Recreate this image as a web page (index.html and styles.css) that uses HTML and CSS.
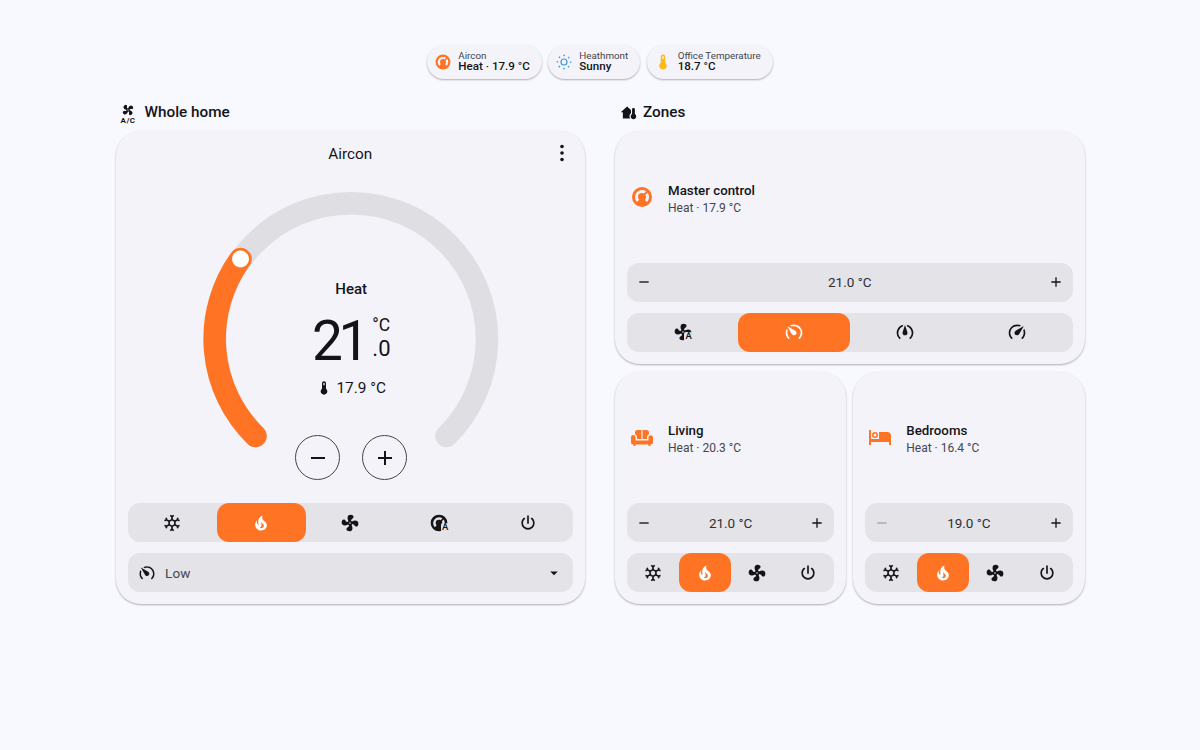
FILE: index.html
```html
<!DOCTYPE html>
<html lang="en">
<head>
    <meta charset="UTF-8">
    <meta name="viewport" content="width=device-width, initial-scale=1.0">
    <title>Climate</title>
    <link rel="stylesheet" href="styles.css">
</head>
<body>
    <svg class="icon-defs" aria-hidden="true">
        <symbol id="i-fan" viewBox="0 0 24 24"><path d="M12,11A1,1 0 0,0 11,12A1,1 0 0,0 12,13A1,1 0 0,0 13,12A1,1 0 0,0 12,11M12.5,2C17,2 17.11,5.57 14.75,6.75C13.76,7.24 13.32,8.29 13.13,9.22C13.61,9.42 14.03,9.73 14.35,10.13C18.05,8.13 22.03,8.92 22.03,12.5C22.03,17 18.46,17.1 17.28,14.73C16.78,13.74 15.72,13.3 14.79,13.11C14.59,13.59 14.28,14 13.88,14.34C15.87,18.03 15.08,22 11.5,22C7,22 6.91,18.42 9.27,17.24C10.25,16.75 10.69,15.71 10.89,14.79C10.4,14.59 9.97,14.27 9.65,13.87C5.96,15.85 2,15.07 2,11.5C2,7 5.56,6.89 6.74,9.26C7.24,10.25 8.29,10.68 9.22,10.87C9.41,10.39 9.73,9.97 10.14,9.65C8.15,5.96 8.94,2 12.5,2Z"/></symbol>
        <symbol id="i-fire" viewBox="0 0 24 24"><path d="M17.66 11.2C17.43 10.9 17.15 10.64 16.89 10.38C16.22 9.78 15.46 9.35 14.82 8.72C13.33 7.26 13 4.85 13.95 3C13 3.23 12.17 3.75 11.46 4.32C8.87 6.4 7.85 10.07 9.07 13.22C9.11 13.32 9.15 13.42 9.15 13.55C9.15 13.77 9 13.97 8.8 14.05C8.57 14.15 8.33 14.09 8.14 13.93C8.08 13.88 8.04 13.83 8 13.76C6.87 12.33 6.69 10.28 7.45 8.64C5.78 10 4.87 12.3 5 14.47C5.06 14.97 5.12 15.47 5.29 15.97C5.43 16.57 5.7 17.17 6 17.7C7.08 19.43 8.95 20.67 10.96 20.92C13.1 21.19 15.39 20.8 17.03 19.32C18.86 17.66 19.5 15 18.56 12.72L18.43 12.46C18.22 12 17.66 11.2 17.66 11.2M14.5 17.5C14.22 17.74 13.76 18 13.4 18.1C12.28 18.5 11.16 17.94 10.5 17.28C11.69 17 12.4 16.12 12.61 15.23C12.78 14.43 12.46 13.77 12.33 13C12.21 12.26 12.23 11.63 12.5 10.94C12.69 11.32 12.89 11.7 13.13 12C13.9 13 15.11 13.44 15.37 14.8C15.41 14.94 15.43 15.08 15.43 15.23C15.46 16.05 15.1 16.95 14.5 17.5H14.5Z"/></symbol>
        <symbol id="i-snow" viewBox="0 0 24 24"><path d="M20.79,13.95L18.46,14.57L16.46,13.44V10.56L18.46,9.43L20.79,10.05L21.31,8.12L19.54,7.65L20,5.88L18.07,5.36L17.45,7.69L15.45,8.82L13,7.38V5.12L14.71,3.41L13.29,2L12,3.29L10.71,2L9.29,3.41L11,5.12V7.38L8.5,8.82L6.5,7.69L5.92,5.36L4,5.88L4.47,7.65L2.7,8.12L3.22,10.05L5.55,9.43L7.55,10.56V13.45L5.55,14.58L3.22,13.96L2.7,15.89L4.47,16.36L4,18.12L5.93,18.64L6.55,16.31L8.55,15.18L11,16.62V18.88L9.29,20.59L10.71,22L12,20.71L13.29,22L14.7,20.59L13,18.88V16.62L15.5,15.17L17.5,16.3L18.12,18.63L20,18.12L19.53,16.35L21.3,15.88L20.79,13.95M9.5,10.56L12,9.11L14.5,10.56V13.44L12,14.89L9.5,13.44V10.56Z"/></symbol>
        <symbol id="i-power" viewBox="0 0 24 24"><path d="M16.56,5.44L15.11,6.89C16.84,7.94 18,9.83 18,12A6,6 0 0,1 12,18A6,6 0 0,1 6,12C6,9.83 7.16,7.94 8.88,6.88L7.44,5.44C5.36,6.88 4,9.28 4,12A8,8 0 0,0 12,20A8,8 0 0,0 20,12C20,9.28 18.64,6.88 16.56,5.44M13,3H11V13H13"/></symbol>
        <symbol id="i-thermostat" viewBox="0 0 24 24"><path fill-rule="evenodd" d="M16.95,16.95L14.83,14.83C15.55,14.1 16,13.1 16,12C16,11.26 15.79,10.57 15.43,10L17.6,7.81C18.5,9.05 19,10.5 19,12C19,13.93 18.22,15.68 16.95,16.95M12,5C13.5,5 14.95,5.5 16.19,6.4L14,8.56C13.43,8.21 12.74,8 12,8A4,4 0 0,0 8,12C8,13.1 8.45,14.1 9.17,14.83L7.05,16.95C5.78,15.68 5,13.93 5,12A7,7 0 0,1 12,5M12,2A10,10 0 0,0 2,12A10,10 0 0,0 12,22A10,10 0 0,0 22,12A10,10 0 0,0 12,2Z"/></symbol>
        <symbol id="i-thermometer" viewBox="0 0 24 24"><path d="M15 13V5A3 3 0 0 0 9 5V13A5 5 0 1 0 15 13M12 4A1 1 0 0 1 13 5V8H11V5A1 1 0 0 1 12 4Z"/></symbol>
        <symbol id="i-slow" viewBox="0 0 24 24"><path d="M12 16C13.66 16 15 14.66 15 13C15 11.88 14.39 10.9 13.5 10.39L3.79 4.77L9.32 14.35C9.82 15.33 10.83 16 12 16M12 3C10.19 3 8.5 3.5 7.03 4.32L9.13 5.53C10 5.19 11 5 12 5C16.42 5 20 8.58 20 13C20 15.21 19.11 17.21 17.66 18.65H17.65C17.26 19.04 17.26 19.67 17.65 20.06C18.04 20.45 18.68 20.45 19.07 20.07C20.88 18.26 22 15.76 22 13C22 7.5 17.5 3 12 3M2 13C2 15.76 3.12 18.26 4.93 20.07C5.32 20.45 5.95 20.45 6.34 20.06C6.73 19.67 6.73 19.04 6.34 18.65C4.89 17.2 4 15.21 4 13C4 12 4.19 11 4.54 10.1L3.33 8C2.5 9.5 2 11.18 2 13Z"/></symbol>
        <symbol id="i-medium" viewBox="0 0 24 24"><path d="M12 3.5L14.7 11.7A3 3 0 1 1 9.3 11.7Z"/><path d="M9.8 3.25A10 10 0 0 0 4.93 20.07C5.32 20.45 5.95 20.45 6.34 20.06C6.73 19.67 6.73 19.04 6.34 18.65A8 8 0 0 1 9.3 5.5ZM14.2 3.25A10 10 0 0 1 19.07 20.07C18.68 20.45 18.05 20.45 17.66 20.06C17.27 19.67 17.27 19.04 17.66 18.65A8 8 0 0 0 14.7 5.5Z"/></symbol>
        <symbol id="i-high" viewBox="0 0 24 24"><path d="M12,16A3,3 0 0,1 9,13C9,11.88 9.61,10.9 10.5,10.39L20.21,4.77L14.68,14.35C14.18,15.33 13.17,16 12,16M12,3C13.81,3 15.5,3.5 16.97,4.32L14.87,5.53C14,5.19 13,5 12,5A8,8 0 0,0 4,13C4,15.21 4.89,17.21 6.34,18.65H6.35C6.74,19.04 6.74,19.67 6.35,20.06C5.96,20.45 5.32,20.45 4.93,20.07V20.07C3.12,18.26 2,15.76 2,13A10,10 0 0,1 12,3M22,13C22,15.76 20.88,18.26 19.07,20.07V20.07C18.68,20.45 18.05,20.45 17.66,20.06C17.27,19.67 17.27,19.04 17.66,18.65V18.65C19.11,17.2 20,15.21 20,13C20,12 19.81,11 19.46,10.1L20.67,8C21.5,9.5 22,11.18 22,13Z"/></symbol>
        <symbol id="i-sofa" viewBox="0 0 24 24"><path d="M5 9.3V7.5A2.5 2.5 0 0 1 7.5 5H11.4V14H7V12A3 3 0 0 0 5 9.3M12.6 5H16.5A2.5 2.5 0 0 1 19 7.5V9.3A3 3 0 0 0 17 12V14H12.6V5M3 10A2.3 2.3 0 0 1 5.5 12V15.5H18.5V12A2.3 2.3 0 0 1 23 12V17A2.5 2.5 0 0 1 20.5 19.5V21H18.5V19.5H5.5V21H3.5V19.5A2.5 2.5 0 0 1 1 17V12A2 2 0 0 1 3 10Z"/></symbol>
        <symbol id="i-bed" viewBox="0 0 24 24"><path fill-rule="evenodd" d="M19,7H11V14H3V5H1V20H3V17H21V20H23V11A4,4 0 0,0 19,7M7,13A3,3 0 0,0 10,10A3,3 0 0,0 7,7A3,3 0 0,0 4,10A3,3 0 0,0 7,13M7,11.5A1.5,1.5 0 0,1 5.5,10A1.5,1.5 0 0,1 7,8.5A1.5,1.5 0 0,1 8.5,10A1.5,1.5 0 0,1 7,11.5Z"/></symbol>
        <symbol id="i-zones" viewBox="0 0 24 24"><path d="M10 3.5L1 11.5H4V20.5H14.5A5 5 0 0 1 15.5 13.2V8.5Z"/><path d="M21 14.2V7.5A2 2 0 0 0 17 7.5V14.2A3.9 3.9 0 1 0 21 14.2Z"/></symbol>
    </svg>

    <div class="page">
        <div class="chips">
            <div class="chip">
                <svg class="chip-icon c-orange"><use href="#i-thermostat"/></svg>
                <div class="chip-text"><div class="chip-label">Aircon</div><div class="chip-value">Heat · 17.9 °C</div></div>
            </div>
            <div class="chip">
                <svg class="chip-icon" viewBox="0 0 24 24">
                    <circle cx="12" cy="12" r="4" fill="none" stroke="#3f9ce0" stroke-width="1.6"/>
                    <circle cx="12" cy="12" r="8.8" fill="none" stroke="#3f9ce0" stroke-width="1.8" stroke-dasharray="2.2 4.71" stroke-dashoffset="1.1"/>
                </svg>
                <div class="chip-text"><div class="chip-label">Heathmont</div><div class="chip-value">Sunny</div></div>
            </div>
            <div class="chip">
                <svg class="chip-icon c-yellow"><use href="#i-thermometer"/></svg>
                <div class="chip-text"><div class="chip-label">Office Temperature</div><div class="chip-value">18.7 °C</div></div>
            </div>
        </div>

        <div class="columns">
            <section class="column">
                <h2 class="section-title">
                    <span class="ac-icon">
                        <svg class="ac-fan"><use href="#i-fan"/></svg>
                        <span class="ac-text">A/C</span>
                    </span>
                    Whole home
                </h2>
                <div class="card climate-card">
                    <div class="climate-head">
                        <span class="climate-name">Aircon</span>
                        <svg class="more-icon" viewBox="0 0 24 24"><circle cx="12" cy="5.5" r="1.8"/><circle cx="12" cy="12" r="1.8"/><circle cx="12" cy="18.5" r="1.8"/></svg>
                    </div>
                    <div class="gauge">
                        <svg class="gauge-svg" viewBox="0 0 320 320">
                            <path class="gauge-track" d="M64.5 257A136 136 0 1 1 255.5 257"/>
                            <path class="gauge-active" d="M64.5 257A136 136 0 0 1 49.5 80"/>
                            <circle class="gauge-thumb" cx="49.5" cy="80" r="8.5"/>
                        </svg>
                        <div class="gauge-info">
                            <div class="gauge-mode">Heat</div>
                            <div class="gauge-temp">
                                <span class="gauge-big">21</span>
                                <span class="gauge-side"><span>°C</span><span>.0</span></span>
                            </div>
                            <div class="gauge-current">
                                <svg class="thermo-small"><use href="#i-thermometer"/></svg>
                                17.9 °C
                            </div>
                        </div>
                        <div class="gauge-buttons">
                            <div class="round-btn">
                                <svg viewBox="0 0 24 24"><path d="M5 11h14v2H5z"/></svg>
                            </div>
                            <div class="round-btn">
                                <svg viewBox="0 0 24 24"><path d="M11 5h2v6h6v2h-6v6h-2v-6H5v-2h6z"/></svg>
                            </div>
                        </div>
                    </div>
                    <div class="segments">
                        <div class="segment"><svg><use href="#i-snow"/></svg></div>
                        <div class="segment active"><svg><use href="#i-fire"/></svg></div>
                        <div class="segment"><svg><use href="#i-fan"/></svg></div>
                        <div class="segment">
                            <span class="auto-icon"><svg><use href="#i-thermostat"/></svg><span class="auto-letter">A</span></span>
                        </div>
                        <div class="segment"><svg><use href="#i-power"/></svg></div>
                    </div>
                    <div class="select">
                        <svg class="select-icon"><use href="#i-slow"/></svg>
                        <span class="select-value">Low</span>
                        <svg class="select-caret" viewBox="0 0 24 24"><path d="M7 10l5 5 5-5z"/></svg>
                    </div>
                </div>
            </section>

            <section class="column">
                <h2 class="section-title">
                    <svg class="zones-icon"><use href="#i-zones"/></svg>
                    Zones
                </h2>
                <div class="zones">
                    <div class="card zone zone-wide">
                        <div class="zone-info">
                            <svg class="zone-icon"><use href="#i-thermostat"/></svg>
                            <div class="zone-text">
                                <div class="zone-name">Master control</div>
                                <div class="zone-state">Heat · 17.9 °C</div>
                            </div>
                        </div>
                        <div class="stepper">
                            <svg viewBox="0 0 24 24"><path d="M5 11h14v2H5z"/></svg>
                            <span>21.0 °C</span>
                            <svg viewBox="0 0 24 24"><path d="M11 5h2v6h6v2h-6v6h-2v-6H5v-2h6z"/></svg>
                        </div>
                        <div class="segments">
                            <div class="segment">
                                <span class="auto-icon"><svg><use href="#i-fan"/></svg><span class="auto-letter">A</span></span>
                            </div>
                            <div class="segment active"><svg><use href="#i-slow"/></svg></div>
                            <div class="segment"><svg><use href="#i-medium"/></svg></div>
                            <div class="segment"><svg><use href="#i-high"/></svg></div>
                        </div>
                    </div>

                    <div class="card zone">
                        <div class="zone-info">
                            <svg class="zone-icon"><use href="#i-sofa"/></svg>
                            <div class="zone-text">
                                <div class="zone-name">Living</div>
                                <div class="zone-state">Heat · 20.3 °C</div>
                            </div>
                        </div>
                        <div class="stepper">
                            <svg viewBox="0 0 24 24"><path d="M5 11h14v2H5z"/></svg>
                            <span>21.0 °C</span>
                            <svg viewBox="0 0 24 24"><path d="M11 5h2v6h6v2h-6v6h-2v-6H5v-2h6z"/></svg>
                        </div>
                        <div class="segments">
                            <div class="segment"><svg><use href="#i-snow"/></svg></div>
                            <div class="segment active"><svg><use href="#i-fire"/></svg></div>
                            <div class="segment"><svg><use href="#i-fan"/></svg></div>
                            <div class="segment"><svg><use href="#i-power"/></svg></div>
                        </div>
                    </div>

                    <div class="card zone">
                        <div class="zone-info">
                            <svg class="zone-icon"><use href="#i-bed"/></svg>
                            <div class="zone-text">
                                <div class="zone-name">Bedrooms</div>
                                <div class="zone-state">Heat · 16.4 °C</div>
                            </div>
                        </div>
                        <div class="stepper">
                            <svg class="disabled" viewBox="0 0 24 24"><path d="M5 11h14v2H5z"/></svg>
                            <span>19.0 °C</span>
                            <svg viewBox="0 0 24 24"><path d="M11 5h2v6h6v2h-6v6h-2v-6H5v-2h6z"/></svg>
                        </div>
                        <div class="segments">
                            <div class="segment"><svg><use href="#i-snow"/></svg></div>
                            <div class="segment active"><svg><use href="#i-fire"/></svg></div>
                            <div class="segment"><svg><use href="#i-fan"/></svg></div>
                            <div class="segment"><svg><use href="#i-power"/></svg></div>
                        </div>
                    </div>
                </div>
            </section>
        </div>
    </div>
</body>
</html>
```

FILE: styles.css
```css
body {
    font-family: Roboto, 'Noto Sans', sans-serif;
    margin: 0;
    background: #f8f8ff;
    color: #141418;
    min-height: 100vh;
}
svg {
    fill: currentColor;
    display: block;
}
.icon-defs {
    width: 0;
    height: 0;
    position: absolute;
}
.page {
    width: 969px;
    margin: 0 auto;
    padding-top: 45px;
}

/* chips */
.chips {
    display: flex;
    justify-content: center;
    gap: 6.5px;
    height: 34px;
}
.chip {
    display: flex;
    align-items: center;
    gap: 6px;
    padding: 0 12px 0 7px;
    background: #f3f3f9;
    border-radius: 17px;
    box-shadow: 0 1px 2px rgba(0,0,0,0.3);
}
.chip-icon {
    width: 18px;
    height: 18px;
}
.c-orange { color: #ff7324; }
.c-yellow { color: #fdb813; }
.chip-text {
    padding-bottom: 3px;
}
.chip-label {
    font-size: 9.8px;
    line-height: 11px;
    color: #44464f;
}
.chip-value {
    font-size: 11.6px;
    line-height: 11px;
    font-weight: 500;
}

/* columns */
.columns {
    display: grid;
    grid-template-columns: 469.5px 469.5px;
    gap: 30px;
    margin-top: 22px;
}
.section-title {
    display: flex;
    align-items: center;
    gap: 6px;
    height: 22px;
    margin: 0 0 8px;
    padding-left: 5px;
    font-size: 15.3px;
    font-weight: 500;
    line-height: 22px;
}
.ac-icon {
    width: 15px;
    height: 20px;
    margin-right: 3px;
    margin-top: 2px;
}
.ac-fan {
    width: 14px;
    height: 14px;
    margin: 0 auto;
    transform: rotate(45deg);
}
.ac-text {
    display: block;
    font-size: 8px;
    font-weight: 700;
    line-height: 7px;
    text-align: center;
    letter-spacing: 0.5px;
}
.zones-icon {
    width: 17px;
    height: 17px;
}

.card {
    background: #f3f3f9;
    border-radius: 25px;
    box-shadow: 0 1px 2px rgba(0,0,0,0.3);
    box-sizing: border-box;
}

/* climate card */
.climate-card {
    height: 473px;
    padding: 0 12px 12px;
    display: flex;
    flex-direction: column;
}
.climate-head {
    position: relative;
    height: 45px;
    display: flex;
    align-items: center;
    justify-content: center;
}
.climate-name {
    font-size: 15.3px;
}
.more-icon {
    position: absolute;
    right: -1px;
    top: 10px;
    width: 24px;
    height: 24px;
}
.gauge {
    position: relative;
    left: 1px;
    width: 320px;
    height: 320px;
    margin: 3px auto 4px;
}
.gauge-svg {
    width: 320px;
    height: 320px;
}
.gauge-track,
.gauge-active {
    fill: none;
    stroke-width: 22.5;
    stroke-linecap: round;
}
.gauge-track { stroke: #dedee3; }
.gauge-active { stroke: #ff7324; }
.gauge-thumb { fill: #fff; }
.gauge-info {
    position: absolute;
    top: 100px;
    left: 0;
    right: 0;
    display: flex;
    flex-direction: column;
    align-items: center;
}
.gauge-mode {
    font-size: 15px;
    font-weight: 500;
    line-height: 20px;
}
.gauge-temp {
    display: flex;
    align-items: flex-start;
    margin-top: 9px;
    height: 60px;
}
.gauge-big {
    font-size: 55px;
    line-height: 66px;
    letter-spacing: -4.5px;
}
.gauge-side {
    display: flex;
    flex-direction: column;
    margin-left: 7.5px;
    font-size: 22px;
    line-height: 24px;
    padding-top: 5px;
}
.gauge-side span:first-child { font-size: 17.5px; }
.gauge-current {
    display: flex;
    align-items: center;
    gap: 4px;
    margin-top: 10px;
    font-size: 15.4px;
    line-height: 20px;
}
.thermo-small {
    width: 16px;
    height: 16px;
}
.gauge-buttons {
    position: absolute;
    top: 256px;
    left: 0;
    right: 0;
    display: flex;
    justify-content: center;
    gap: 22px;
}
.round-btn {
    width: 45px;
    height: 45px;
    box-sizing: border-box;
    border: 1px solid #44464f;
    border-radius: 50%;
    display: flex;
    align-items: center;
    justify-content: center;
}
.round-btn svg {
    width: 24px;
    height: 24px;
}

/* controls */
.segments,
.select,
.stepper {
    height: 39px;
    background: #e3e3e8;
    border-radius: 12px;
}
.segments {
    display: flex;
}
.segment {
    flex: 1;
    display: flex;
    align-items: center;
    justify-content: center;
    border-radius: 12px;
}
.segment svg {
    width: 20px;
    height: 20px;
}
.segment.active {
    background: #ff7324;
    color: #fff;
}
.auto-icon {
    position: relative;
    display: block;
    width: 20px;
    height: 20px;
}
.auto-letter {
    position: absolute;
    right: 1px;
    bottom: 1px;
    padding: 0 0 1px 1px;
    font-size: 9.5px;
    font-weight: 500;
    line-height: 8px;
    background: #e3e3e8;
    border-radius: 2px;
}
.select {
    display: flex;
    align-items: center;
    margin-top: 11px;
    padding: 0 10px;
    color: #44464f;
}
.select-icon {
    width: 18px;
    height: 18px;
    color: #141418;
}
.select-value {
    flex: 1;
    margin-left: 9.5px;
    font-size: 13.5px;
    letter-spacing: 0.2px;
}
.select-caret {
    width: 18px;
    height: 18px;
    color: #141418;
}

/* zones */
.zones {
    display: grid;
    grid-template-columns: 1fr 1fr;
    grid-template-rows: 1fr 1fr;
    gap: 8px 7px;
    height: 473px;
}
.zone {
    display: flex;
    flex-direction: column;
    padding: 0 12px 12px;
}
.zone-wide {
    grid-column: span 2;
}
.zone-info {
    flex: 1;
    display: flex;
    align-items: center;
    gap: 14px;
    padding-left: 3px;
}
.zone-icon {
    width: 24px;
    height: 24px;
    color: #ff7324;
    flex-shrink: 0;
}
.zone-text {
    padding-top: 5px;
}
.zone-name {
    font-size: 13.3px;
    font-weight: 500;
    line-height: 17px;
}
.zone-state {
    margin-top: 1px;
    font-size: 12px;
    line-height: 17px;
    color: #44464f;
}
.stepper {
    display: flex;
    align-items: center;
    justify-content: space-between;
    padding: 0 9px;
    margin-bottom: 11px;
    font-size: 13.5px;
    color: #2e2f35;
}
.stepper svg {
    width: 16px;
    height: 16px;
    color: #141418;
}
.stepper svg.disabled {
    color: #a4a4a8;
}
```
